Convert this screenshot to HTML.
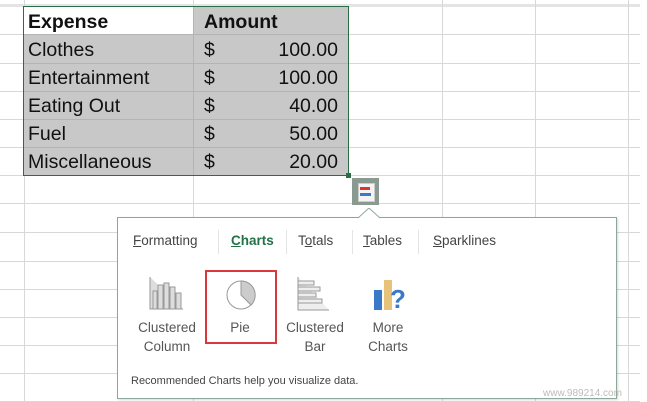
<!DOCTYPE html>
<html><head><style>
body{margin:0;width:647px;height:402px;background:#fff;position:relative;overflow:hidden;font-family:"Liberation Sans",sans-serif}
.a{position:absolute}
.h{position:absolute;left:0;width:640px;height:1px;background:#d8d8d8}
.v{position:absolute;top:0;width:1px;height:402px;background:#d8d8d8}
.cell{position:absolute;font-size:19.5px;color:#111;line-height:28px}
.tab{position:absolute;top:233px;font-size:13.5px;color:#444}
.lbl{position:absolute;font-size:13.5px;color:#555;text-align:center;line-height:19px}
</style></head><body>
<div class="a" style="left:0;top:4px;width:640px;height:3px;background:#e4e4e4"></div>
<div class="h" style="top:34px"></div><div class="h" style="top:63px"></div><div class="h" style="top:91px"></div><div class="h" style="top:119px"></div><div class="h" style="top:147px"></div><div class="h" style="top:175px"></div><div class="h" style="top:203px"></div><div class="h" style="top:232px"></div><div class="h" style="top:261px"></div><div class="h" style="top:289px"></div><div class="h" style="top:317px"></div><div class="h" style="top:345px"></div><div class="h" style="top:373px"></div><div class="h" style="top:401px"></div>
<div class="v" style="left:24px"></div><div class="v" style="left:193px"></div><div class="v" style="left:442px"></div><div class="v" style="left:535px"></div><div class="v" style="left:628px"></div>
<div class="a" style="left:23px;top:6px;width:326px;height:170px;background:#c8c8c8"></div>
<div class="a" style="left:24px;top:7px;width:169px;height:27px;background:#fff"></div>
<div class="a" style="left:24px;top:34px;width:325px;height:1px;background:#b4b4b4"></div>
<div class="a" style="left:24px;top:63px;width:325px;height:1px;background:#b4b4b4"></div>
<div class="a" style="left:24px;top:91px;width:325px;height:1px;background:#b4b4b4"></div>
<div class="a" style="left:24px;top:119px;width:325px;height:1px;background:#b4b4b4"></div>
<div class="a" style="left:24px;top:147px;width:325px;height:1px;background:#b4b4b4"></div>
<div class="a" style="left:193px;top:7px;width:1px;height:169px;background:#b4b4b4"></div>
<div class="a" style="left:23px;top:6px;width:324px;height:168px;border:1px solid #2b6e45"></div>
<div class="a" style="left:346px;top:173px;width:5px;height:5px;background:#2b6e45"></div>
<div class="cell" style="left:28px;top:8px;font-weight:bold">Expense</div>
<div class="cell" style="left:204px;top:8px;font-weight:bold">Amount</div>
<div class="cell" style="left:28px;top:36px">Clothes</div>
<div class="cell" style="left:28px;top:64px">Entertainment</div>
<div class="cell" style="left:28px;top:92px">Eating Out</div>
<div class="cell" style="left:28px;top:120px">Fuel</div>
<div class="cell" style="left:28px;top:148px">Miscellaneous</div>
<div class="cell" style="left:204px;top:36px">$</div><div class="cell" style="left:204px;top:64px">$</div><div class="cell" style="left:204px;top:92px">$</div><div class="cell" style="left:204px;top:120px">$</div><div class="cell" style="left:204px;top:148px">$</div>
<div class="cell" style="right:309px;top:36px">100.00</div>
<div class="cell" style="right:309px;top:64px">100.00</div>
<div class="cell" style="right:309px;top:92px">40.00</div>
<div class="cell" style="right:309px;top:120px">50.00</div>
<div class="cell" style="right:309px;top:148px">20.00</div>
<div class="a" style="left:352px;top:178px;width:27px;height:27px;background:#8a9a90"></div>
<div class="a" style="left:358px;top:183px;width:15px;height:17px;background:#f4f4f4;border:1px solid #ccc"></div>
<div class="a" style="left:360px;top:187px;width:10px;height:3px;background:#d33"></div>
<div class="a" style="left:360px;top:193px;width:11px;height:3px;background:#3a78c8"></div>
<div class="a" style="left:117px;top:217px;width:498px;height:180px;border:1px solid #8fa69a;background:#fff;box-shadow:1px 1px 2px rgba(0,0,0,.15)"></div>
<svg class="a" style="left:358px;top:208px" width="22" height="11"><path d="M0 10 L11 0 L22 10" fill="#fff" stroke="#8fa69a"/></svg>
<div class="tab" style="left:133px"><u>F</u>ormatting</div>
<div class="tab" style="left:231px;color:#217346;font-weight:bold"><u>C</u>harts</div>
<div class="tab" style="left:298px">T<u>o</u>tals</div>
<div class="tab" style="left:363px"><u>T</u>ables</div>
<div class="tab" style="left:433px"><u>S</u>parklines</div>
<div class="a" style="left:218px;top:230px;width:1px;height:24px;background:#e4e4e4"></div>
<div class="a" style="left:286px;top:230px;width:1px;height:24px;background:#e4e4e4"></div>
<div class="a" style="left:352px;top:230px;width:1px;height:24px;background:#e4e4e4"></div>
<div class="a" style="left:418px;top:230px;width:1px;height:24px;background:#e4e4e4"></div>
<svg class="a" style="left:149px;top:277px" width="36" height="34"><g fill="#ddd" stroke="#999" stroke-width="1"><path d="M1 0 V32 H34"/><rect x="4" y="14" width="4" height="18"/><rect x="9" y="8" width="5" height="24"/><rect x="15" y="6" width="5" height="26"/><rect x="21" y="10" width="5" height="22"/><rect x="27" y="16" width="5" height="16"/></g></svg>
<div class="a" style="left:205px;top:270px;width:68px;height:70px;border:2px solid #d9383c"></div>
<svg class="a" style="left:225px;top:279px" width="32" height="32"><circle cx="16" cy="16" r="14" fill="#fff" stroke="#999"/><path d="M16 16 V2 A14 14 0 0 1 26 26 Z" fill="#ccc" stroke="#999"/></svg>
<svg class="a" style="left:297px;top:277px" width="34" height="36"><g fill="#eee" stroke="#999"><path d="M1 0 V33 H32"/><rect x="1" y="4" width="16" height="4"/><rect x="1" y="10" width="22" height="4"/><rect x="1" y="16" width="18" height="4"/><rect x="1" y="22" width="24" height="4"/></g></svg>
<svg class="a" style="left:372px;top:278px" width="36" height="34"><rect x="2" y="12" width="8" height="20" fill="#3a78c8"/><rect x="12" y="2" width="8" height="30" fill="#e6c27a"/><text x="18" y="30" font-family="Liberation Sans" font-weight="bold" font-size="26" fill="#3a78c8">?</text></svg>
<div class="lbl" style="left:127px;top:318px;width:80px">Clustered<br>Column</div>
<div class="lbl" style="left:210px;top:318px;width:60px">Pie</div>
<div class="lbl" style="left:275px;top:318px;width:80px">Clustered<br>Bar</div>
<div class="lbl" style="left:348px;top:318px;width:80px">More<br>Charts</div>
<div class="a" style="left:131px;top:375px;font-size:11px;color:#444">Recommended Charts help you visualize data.</div>
<div class="a" style="left:543px;top:388px;font-size:10px;color:#bbb">www.989214.com</div>
</body></html>
